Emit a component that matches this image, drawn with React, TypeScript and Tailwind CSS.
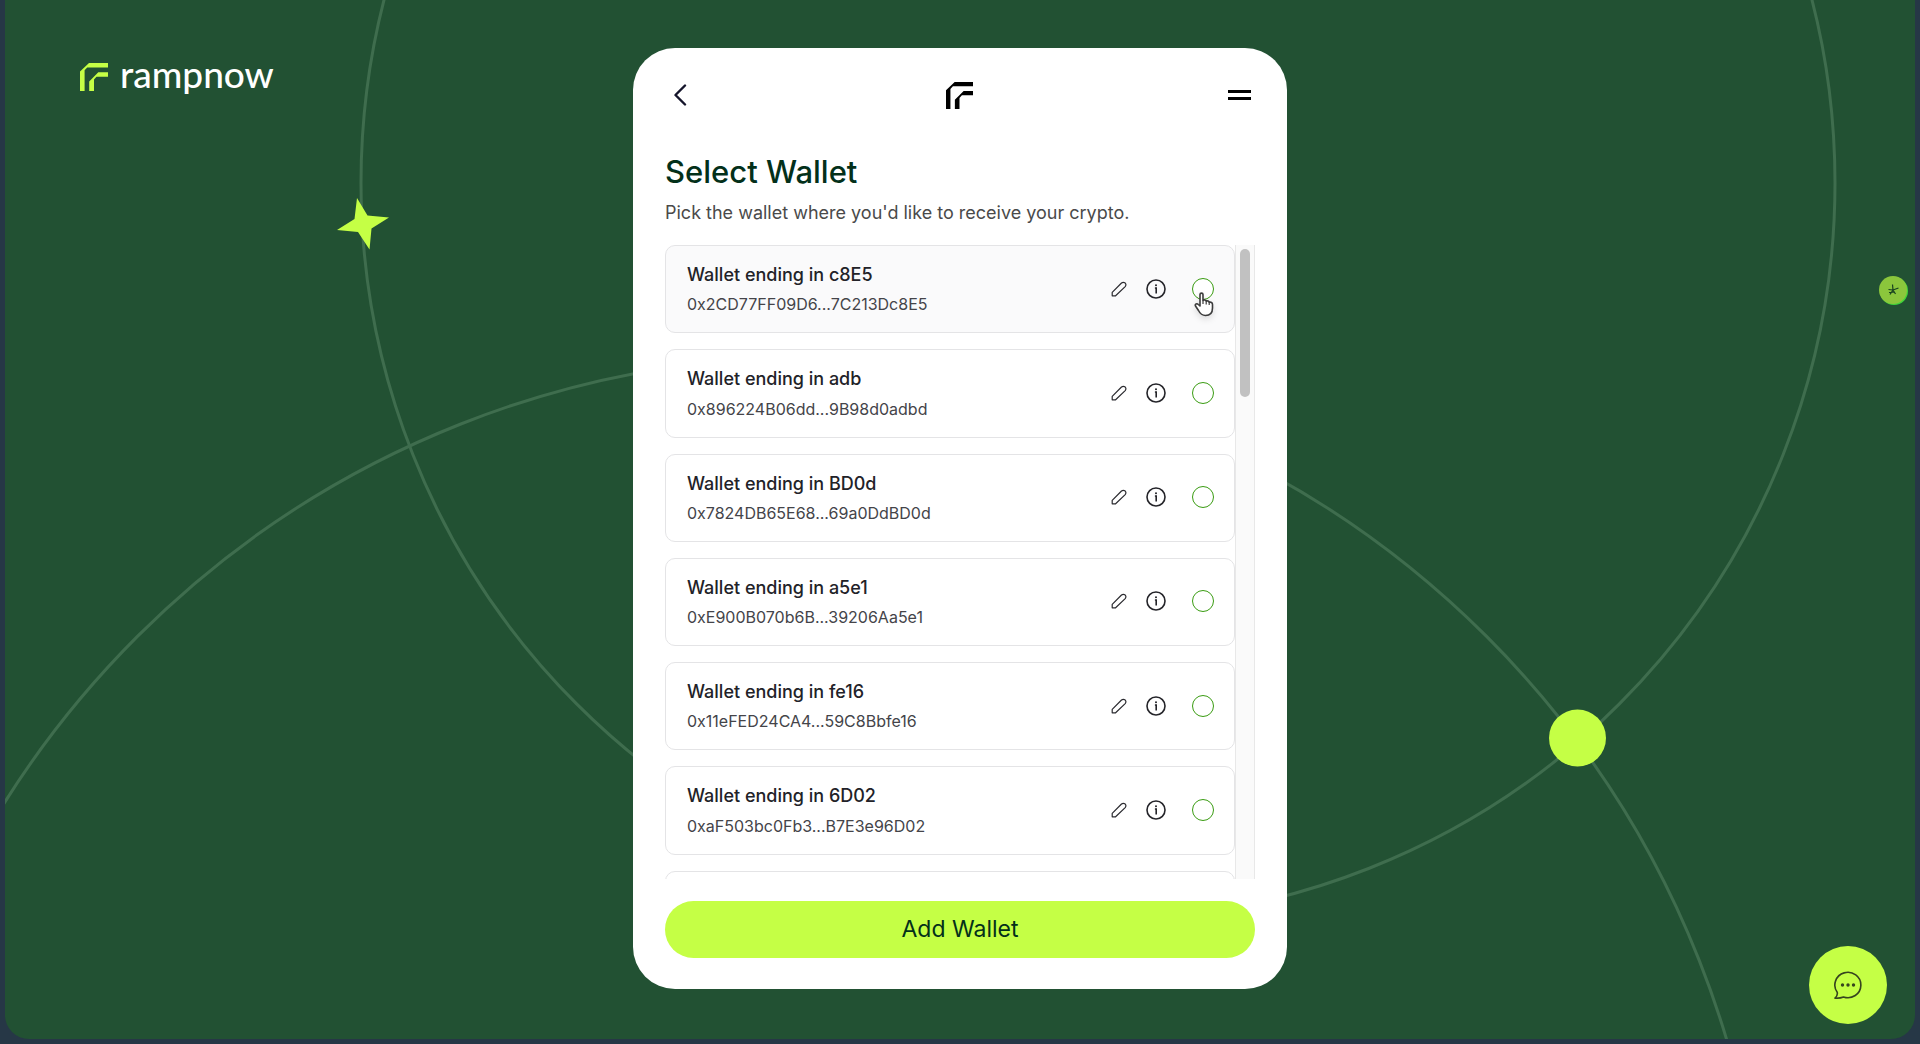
import React, { useState } from "react";

const wallets = [
  { name: "Wallet ending in c8E5", address: "0x2CD77FF09D6...7C213Dc8E5" },
  { name: "Wallet ending in adb", address: "0x896224B06dd...9B98d0adbd" },
  { name: "Wallet ending in BD0d", address: "0x7824DB65E68...69a0DdBD0d" },
  { name: "Wallet ending in a5e1", address: "0xE900B070b6B...39206Aa5e1" },
  { name: "Wallet ending in fe16", address: "0x11eFED24CA4...59C8Bbfe16" },
  { name: "Wallet ending in 6D02", address: "0xaF503bc0Fb3...B7E3e96D02" },
];

const LogoMark = ({ className }: { className: string }) => (
  <svg viewBox="0 0 28 28" fill="currentColor" className={className} aria-hidden="true">
    <path d="M9 0H28V4.4H7.2L4.6 7.2V28H0V8.6Z" />
    <path d="M18.3 9.3H28V13.8H16.5L14 16.6V28H9.2V18.4Z" />
  </svg>
);

const Backdrop = () => (
  <svg
    viewBox="5 0 1910 1039"
    preserveAspectRatio="xMidYMid slice"
    className="absolute inset-0 w-full h-full"
    fill="none"
    aria-hidden="true"
  >
    <g stroke="#3f6d4e" strokeWidth="3">
      <circle cx="1098" cy="183" r="737" />
      <circle cx="812" cy="1311" r="954" />
    </g>
    <circle cx="1577.5" cy="738" r="28.5" fill="#c5ff45" />
    <path
      d="M357 198L367.5 215.5L389 217.5L371.5 228.5L369.5 249.5L358 232L337 230L354.5 219Z"
      fill="#c5ff45"
    />
  </svg>
);

const PencilIcon = () => (
  <svg viewBox="0 0 16 16" className="w-4 h-4" fill="none" stroke="#2b2b30" strokeWidth="1.2" strokeLinejoin="round">
    <path d="M1.2 14.8V11.4L10.5 2Q12.3 .6 14.2 2Q15.6 3.8 14.2 5.6L4.6 14.8Z" />
  </svg>
);

const InfoIcon = () => (
  <svg viewBox="0 0 20 20" className="w-5 h-5" fill="none" stroke="#242429" strokeWidth="1.6">
    <circle cx="10" cy="10" r="9" />
    <path d="M8.9 9H10.2V14.5" />
    <circle cx="10" cy="6.3" r="1" fill="#242429" stroke="none" />
  </svg>
);

const HandCursor = () => (
  <svg
    viewBox="0 0 20 26"
    className="absolute left-[2px] top-[14px] w-5 h-[26px] pointer-events-none drop-shadow-md"
    fill="#fff"
    stroke="#3c3c3c"
    strokeWidth="1.6"
    strokeLinejoin="round"
    aria-hidden="true"
  >
    <path d="M6 2.5C6 .6 9 .6 9 2.5V8.5C10 7.5 12 7.8 12.2 9.2C13.5 8.4 15 9 15.2 10.3C16.8 9.8 18.5 10.7 18.5 12.5V16C18.5 20.5 16 23.5 11.5 23.5C7.5 23.5 6 21.5 4.5 18.5L1.5 14C.6 12 3 11 4.3 12.5L6 14Z" />
    <path d="M9 8.5V12M12.2 9.2V12.5M15.2 10.3V13" strokeWidth="1.2" />
  </svg>
);

const App = () => {
  const [selected, setSelected] = useState<number | null>(null);

  return (
    <div className="min-h-screen bg-[#263746] px-[5px] pb-[5px] flex font-['Inter',sans-serif]">
      <div className="relative flex-1 overflow-hidden rounded-b-[24px] bg-[#225133]">
        <Backdrop />

        <div className="relative grid grid-cols-[1fr_minmax(0,654px)_1fr] pt-12">
          <a href="#" className="flex items-start gap-3 self-start pl-[75px] text-[#c5ff45]">
            <LogoMark className="mt-[15px] w-7 h-7" />
            <span className="font-['Lato',sans-serif] text-[37px] leading-[52px] font-medium text-white">rampnow</span>
          </a>

          <main className="flex flex-col rounded-[42px] bg-white px-8 pb-[31px] pt-[25px]">
            <header className="flex items-center justify-between h-11">
              <button aria-label="Back" className="p-2">
                <svg viewBox="0 0 14 22" className="w-[14px] h-[22px]" fill="none" stroke="#15152b" strokeWidth="2.4" strokeLinecap="round" strokeLinejoin="round">
                  <path d="M12 1.5L2.5 11L12 20.5" />
                </svg>
              </button>
              <LogoMark className="w-[27px] h-[27px] text-black" />
              <button aria-label="Menu" className="flex flex-col gap-1 p-1">
                <span className="w-[23px] h-[3px] bg-black"></span>
                <span className="w-[23px] h-[3px] bg-black"></span>
              </button>
            </header>

            <h1 className="mt-[35px] text-[31px] leading-10 font-medium text-[#03301a]">Select Wallet</h1>
            <p className="mt-[5px] text-lg leading-8 text-[#4a4a4a]">
              Pick the wallet where you'd like to receive your crypto.
            </p>

            <div className="mt-4 flex h-[634px] overflow-hidden">
              <ul className="flex flex-1 flex-col gap-4">
                {wallets.map((item, inx) => (
                  <li
                    key={inx}
                    className={`flex shrink-0 items-center justify-between rounded-[10px] border border-[#e4e4e6] pl-[21px] pr-5 pt-[14px] pb-[15px] ${inx === 0 ? "bg-[#fafafb]" : "bg-white"}`}
                  >
                    <label htmlFor={`wallet-${inx}`} className="flex flex-col gap-[2px]">
                      <span className="text-lg leading-relaxed font-medium text-[#222228]">{item.name}</span>
                      <span className="text-base leading-relaxed text-[#444449]">{item.address}</span>
                    </label>
                    <div className="flex items-center">
                      <button aria-label="Edit wallet">
                        <PencilIcon />
                      </button>
                      <button aria-label="Wallet details" className="ml-[19px]">
                        <InfoIcon />
                      </button>
                      <div className="relative ml-[26px] flex">
                        <input
                          type="radio"
                          name="wallet"
                          id={`wallet-${inx}`}
                          checked={selected === inx}
                          onChange={() => setSelected(inx)}
                          className="w-[22px] h-[22px] appearance-none rounded-full border border-[#3a9c12] bg-white checked:bg-[#3a9c12]"
                        />
                        {inx === 0 && <HandCursor />}
                      </div>
                    </div>
                  </li>
                ))}
                <li className="h-[88px] shrink-0 rounded-[10px] border border-[#e4e4e6]"></li>
              </ul>
              <div className="w-5 shrink-0 border-x border-[#e8e8e8] bg-[#fafafa] px-1 pt-1">
                <div className="h-[148px] rounded-full bg-[#c1c1c1]"></div>
              </div>
            </div>

            <button className="mt-[22px] h-[57px] rounded-full bg-[#c5ff45] text-[23px] text-[#03301a]">Add Wallet</button>
          </main>
        </div>

        <div className="absolute right-[8px] top-[276px] w-7 h-7 rounded-full bg-[#8bc63c] shadow-[1px_1px_0_#3fd63a] flex items-center justify-center">
          <svg viewBox="0 0 12 12" className="w-3 h-3" fill="none" stroke="#174020" strokeWidth="1.2">
            <path d="M5.5 .5L6 6L11.5 4M6 6L1.5 5.5M6 6L3 10.5M6 6L8.5 10M2 8.5L7 8" />
          </svg>
        </div>

        <button
          aria-label="Open chat"
          className="absolute bottom-[15px] right-[28px] w-[78px] h-[78px] rounded-full bg-[#c5ff45] flex items-center justify-center"
        >
          <svg viewBox="0 0 28 28" className="w-7 h-7" fill="none" stroke="#37451f" strokeWidth="1.6" strokeLinejoin="round">
            <path d="M1 27.2C2.8 25.5 3.8 23.5 3.2 21.3A13 12.7 0 1 1 9.5 26C7 27 4 27.3 1 27.2Z" />
            <g fill="#37451f" stroke="none">
              <circle cx="8.5" cy="14" r="1.7" />
              <circle cx="14" cy="14" r="1.7" />
              <circle cx="19.5" cy="14" r="1.7" />
            </g>
          </svg>
        </button>
      </div>
    </div>
  );
};

export default App;
